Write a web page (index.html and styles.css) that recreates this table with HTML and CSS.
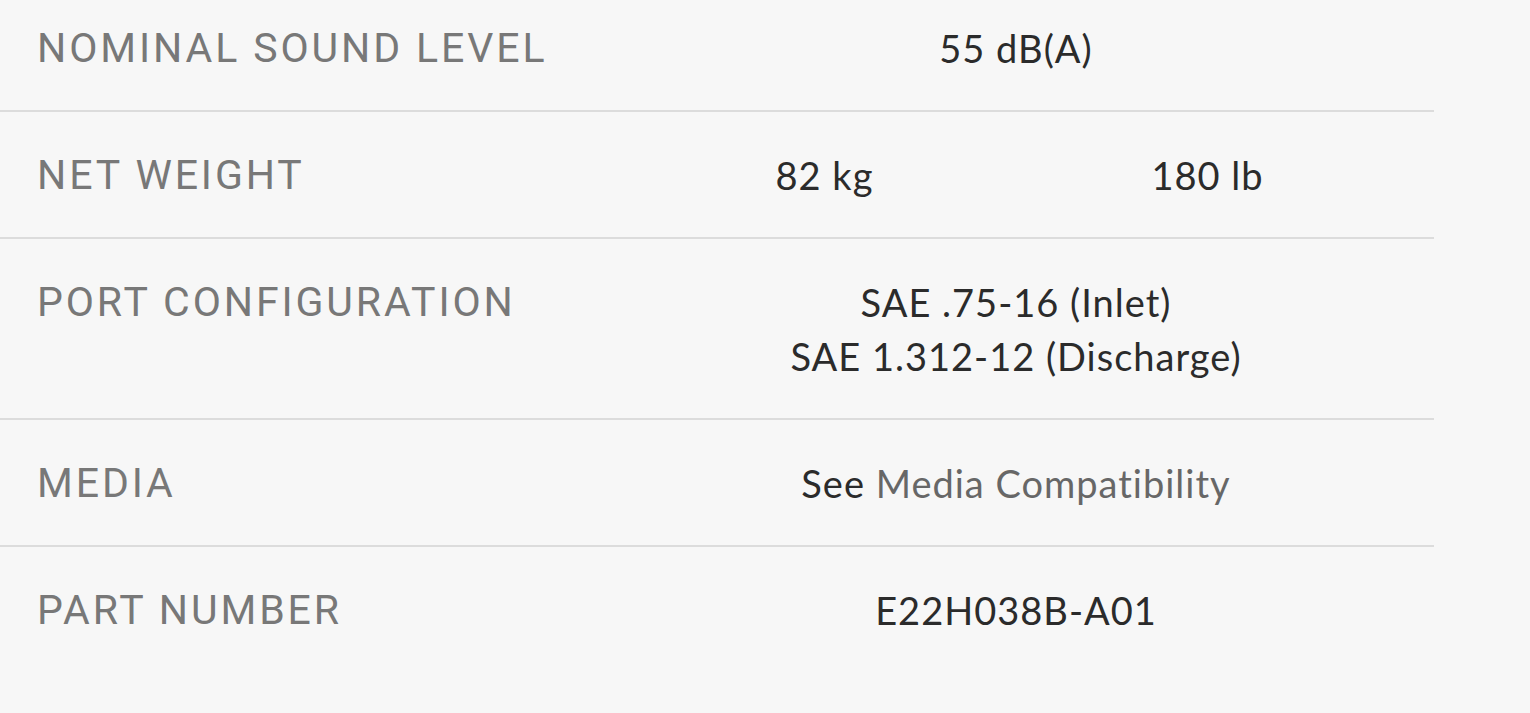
FILE: index.html
```html
<!DOCTYPE html>
<html>
<head>
<meta charset="utf-8">
<link rel="stylesheet" href="styles.css">
</head>
<body>
<div class="specs">
  <div class="row">
    <div class="label">NOMINAL SOUND LEVEL</div>
    <div class="value span">55 dB(A)</div>
  </div>
  <div class="row">
    <div class="label">NET WEIGHT</div>
    <div class="value">82 kg</div>
    <div class="value">180 lb</div>
  </div>
  <div class="row">
    <div class="label">PORT CONFIGURATION</div>
    <div class="value span">SAE .75-16 (Inlet)<br>SAE 1.312-12 (Discharge)</div>
  </div>
  <div class="row">
    <div class="label">MEDIA</div>
    <div class="value span">See <a class="link" href="#">Media Compatibility</a></div>
  </div>
  <div class="row last">
    <div class="label">PART NUMBER</div>
    <div class="value span">E22H038B-A01</div>
  </div>
</div>
</body>
</html>
```
FILE: styles.css
```css
html, body {
  margin: 0;
  padding: 0;
  background: #f7f7f7;
}
.specs {
  width: 1434px;
  margin-top: -15px;
}
.row {
  display: grid;
  grid-template-columns: 596px 383px 383px;
  padding: 36px 36px 35px 37px;
  border-bottom: 2px solid #dcdcdc;
  line-height: 54px;
}
.row.last {
  border-bottom: none;
}
.label {
  font-family: Roboto, "Liberation Sans", sans-serif;
  font-size: 41px;
  letter-spacing: 2.9px;
  color: #787878;
  white-space: nowrap;
}
.value {
  font-family: Lato, "Liberation Sans", sans-serif;
  font-size: 38px;
  letter-spacing: 1px;
  font-variant-ligatures: none;
  color: #2b2b2b;
  text-align: center;
}
.value.span {
  grid-column: 2 / 4;
}
.link {
  color: #676767;
  text-decoration: none;
}
```
